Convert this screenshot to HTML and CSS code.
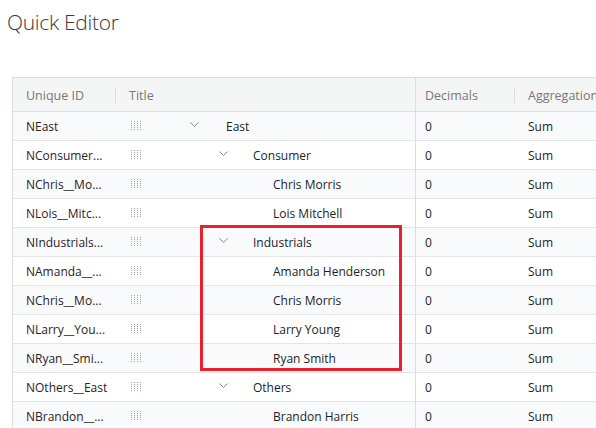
FILE: index.html
```html
<!DOCTYPE html>
<html>
<head>
<meta charset="utf-8">
<link rel="stylesheet" href="styles.css">
</head>
<body>
<h1 class="page-title">Quick Editor</h1>
<div class="grid-wrap">
  <div class="grid">
    <div class="row head">
      <div class="cell c-id"><span class="hd">Unique ID</span><span class="sep"></span></div>
      <div class="cell c-title"><span class="hd">Title</span></div>
      <div class="cell c-dec"><span class="hd">Decimals</span><span class="sep"></span></div>
      <div class="cell c-agg"><span class="hd">Aggregation</span></div>
    </div>

    <div class="row odd">
      <div class="cell c-id">NEast</div>
      <div class="cell c-title"><span class="handle"></span><span class="node lvl0"><svg class="chev" width="9" height="5" viewBox="0 0 9 5"><path d="M0.5 0.5 L4.5 4.5 L8.5 0.5" fill="none" stroke="#8a8886" stroke-width="1"/></svg>East</span></div>
      <div class="cell c-dec">0</div><div class="cell c-agg">Sum</div>
    </div>
    <div class="row">
      <div class="cell c-id">NConsumer...</div>
      <div class="cell c-title"><span class="handle"></span><span class="node lvl1"><svg class="chev" width="9" height="5" viewBox="0 0 9 5"><path d="M0.5 0.5 L4.5 4.5 L8.5 0.5" fill="none" stroke="#8a8886" stroke-width="1"/></svg>Consumer</span></div>
      <div class="cell c-dec">0</div><div class="cell c-agg">Sum</div>
    </div>
    <div class="row odd">
      <div class="cell c-id">NChris__Mo...</div>
      <div class="cell c-title"><span class="handle"></span><span class="node leaf">Chris Morris</span></div>
      <div class="cell c-dec">0</div><div class="cell c-agg">Sum</div>
    </div>
    <div class="row">
      <div class="cell c-id">NLois__Mitc...</div>
      <div class="cell c-title"><span class="handle"></span><span class="node leaf">Lois Mitchell</span></div>
      <div class="cell c-dec">0</div><div class="cell c-agg">Sum</div>
    </div>
    <div class="row odd">
      <div class="cell c-id">NIndustrials...</div>
      <div class="cell c-title"><span class="handle"></span><span class="node lvl1"><svg class="chev" width="9" height="5" viewBox="0 0 9 5"><path d="M0.5 0.5 L4.5 4.5 L8.5 0.5" fill="none" stroke="#8a8886" stroke-width="1"/></svg>Industrials</span></div>
      <div class="cell c-dec">0</div><div class="cell c-agg">Sum</div>
    </div>
    <div class="row">
      <div class="cell c-id">NAmanda__...</div>
      <div class="cell c-title"><span class="handle"></span><span class="node leaf">Amanda Henderson</span></div>
      <div class="cell c-dec">0</div><div class="cell c-agg">Sum</div>
    </div>
    <div class="row odd">
      <div class="cell c-id">NChris__Mo...</div>
      <div class="cell c-title"><span class="handle"></span><span class="node leaf">Chris Morris</span></div>
      <div class="cell c-dec">0</div><div class="cell c-agg">Sum</div>
    </div>
    <div class="row">
      <div class="cell c-id">NLarry__You...</div>
      <div class="cell c-title"><span class="handle"></span><span class="node leaf">Larry Young</span></div>
      <div class="cell c-dec">0</div><div class="cell c-agg">Sum</div>
    </div>
    <div class="row odd">
      <div class="cell c-id">NRyan__Smi...</div>
      <div class="cell c-title"><span class="handle"></span><span class="node leaf">Ryan Smith</span></div>
      <div class="cell c-dec">0</div><div class="cell c-agg">Sum</div>
    </div>
    <div class="row">
      <div class="cell c-id">NOthers__East</div>
      <div class="cell c-title"><span class="handle"></span><span class="node lvl1"><svg class="chev" width="9" height="5" viewBox="0 0 9 5"><path d="M0.5 0.5 L4.5 4.5 L8.5 0.5" fill="none" stroke="#8a8886" stroke-width="1"/></svg>Others</span></div>
      <div class="cell c-dec">0</div><div class="cell c-agg">Sum</div>
    </div>
    <div class="row odd">
      <div class="cell c-id">NBrandon__...</div>
      <div class="cell c-title"><span class="handle"></span><span class="node leaf">Brandon Harris</span></div>
      <div class="cell c-dec">0</div><div class="cell c-agg">Sum</div>
    </div>
  </div>
  <div class="highlight"></div>
</div>
</body>
</html>
```
FILE: styles.css
```css
html, body {
  margin: 0;
  padding: 0;
  overflow: hidden;
  background: #ffffff;
}
body {
  font-family: "Open Sans", "Noto Sans", sans-serif;
  color: #252423;
  width: 596px;
  height: 428px;
}
.page-title {
  margin: 0;
  padding: 7px 0 0 7px;
  height: 70px;
  box-sizing: border-box;
  font-size: 21px;
  font-weight: 300;
  line-height: 30px;
  color: #3a3938;
  letter-spacing: -0.3px;
}
.grid-wrap {
  position: relative;
  margin-left: 12px;
  margin-top: 7px;
}
.grid {
  width: 660px;
  border-top: 1px solid #dcdddf;
  border-left: 1px solid #dcdddf;
}
.row {
  display: grid;
  grid-template-columns: 103px 300px 99px 1fr;
  height: 28px;
  border-bottom: 1px solid #e3e4e6;
  background: #ffffff;
  font-size: 12px;
}
.row.odd {
  background: #f9fafc;
}
.row.head {
  height: 33px;
  background: #f4f5f5;
  border-bottom: 1px solid #dedfe0;
}
.cell {
  display: flex;
  align-items: center;
  padding-left: 13px;
  white-space: nowrap;
  overflow: hidden;
  position: relative;
}
.c-id {
  color: #2b2222;
}
.c-title {
  padding-left: 15px;
  border-right: 1px solid #dcdddf;
}
.c-dec {
  padding-left: 9px;
}
.hd {
  color: #7a7877;
  font-size: 12.5px;
}
.head .cell {
  padding-top: 1px;
}
.head .c-title {
  padding-left: 13px;
}
.sep {
  position: absolute;
  right: 0;
  top: 10px;
  width: 1px;
  height: 15px;
  background: #dcdcdc;
}
.handle {
  width: 11px;
  height: 9px;
  flex: none;
  margin-top: -2px;
  background-image:
    linear-gradient(to bottom, transparent 0, transparent 1px, #ffffff 1px, #ffffff 2px),
    linear-gradient(to right, #9a9dbf 0, #9a9dbf 1px, transparent 1px, transparent 3px);
  background-size: 3px 2px, 3px 2px;
}
.odd .handle {
  background-image:
    linear-gradient(to bottom, transparent 0, transparent 1px, #f9fafc 1px, #f9fafc 2px),
    linear-gradient(to right, #9a9dbf 0, #9a9dbf 1px, transparent 1px, transparent 3px);
}
.node {
  display: flex;
  align-items: center;
  color: #201f1e;
}
.lvl0 { padding-left: 48px; }
.lvl1 { padding-left: 77px; }
.leaf { padding-left: 131px; }
.chev {
  flex: none;
  margin-top: -3px;
}
.lvl0 .chev { margin-right: 27px; }
.lvl1 .chev { margin-right: 25px; }
.highlight {
  position: absolute;
  left: 188px;
  top: 148px;
  width: 196px;
  height: 140px;
  border: 3px solid #e9212d;
}
```
